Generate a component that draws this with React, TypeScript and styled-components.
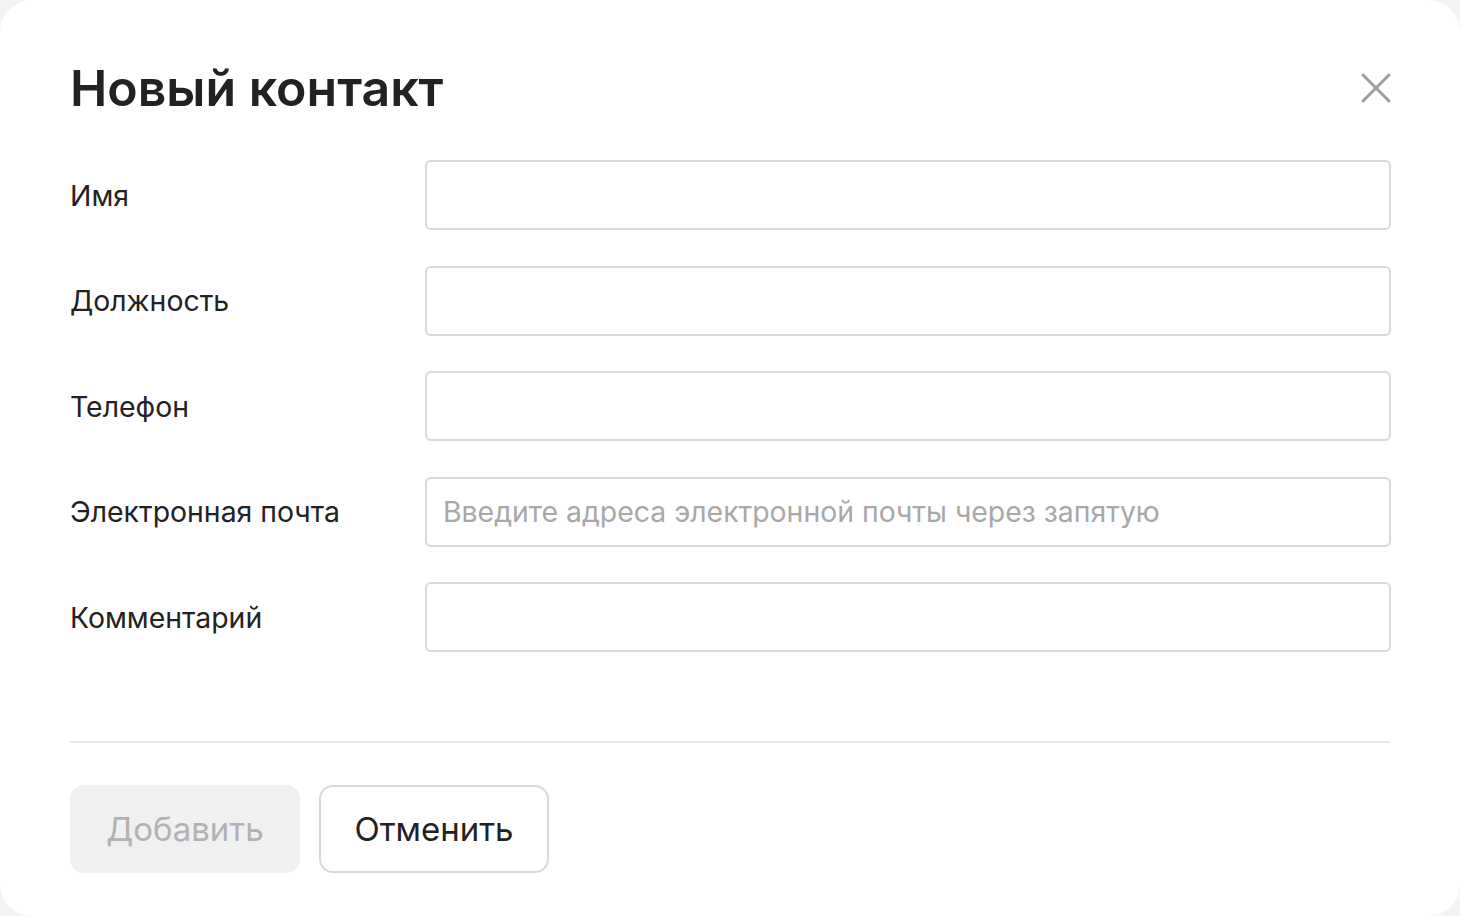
import styled, { createGlobalStyle } from "styled-components";

const GlobalStyle = createGlobalStyle`
  html, body {
    margin: 0;
    padding: 0;
    background: #f3f3f3;
    font-family: Inter, "Noto Sans", "Liberation Sans", sans-serif;
    color: #222;
  }
  * {
    box-sizing: border-box;
  }
`;

const Dialog = styled.div`
  width: 1460px;
  height: 916px;
  background: #fff;
  border-radius: 32px;
  padding: 58px 70px 0 70px;
  display: flex;
  flex-direction: column;
`;

const Header = styled.div`
  display: flex;
  align-items: center;
  justify-content: space-between;
  height: 60px;
`;

const Title = styled.h1`
  margin: 0;
  font-size: 50px;
  line-height: 60px;
  font-weight: 600;
  color: #222;
`;

const CloseButton = styled.button`
  border: none;
  background: none;
  padding: 0;
  width: 32px;
  height: 32px;
  display: flex;
  align-items: center;
  justify-content: center;
  margin-right: -2px;
  cursor: pointer;
`;

const Form = styled.div`
  margin-top: 42px;
  margin-right: -1px;
  display: flex;
  flex-direction: column;
  gap: 35.5px;
`;

const Row = styled.label`
  display: grid;
  grid-template-columns: 355px 1fr;
  align-items: center;
`;

const Label = styled.span`
  font-size: 28.4px;
  color: #222;
`;

const Input = styled.input`
  height: 70px;
  width: 100%;
  border: 2px solid #d9d9d9;
  border-radius: 6px;
  padding: 0 16px;
  font-family: inherit;
  font-size: 28.4px;
  color: #222;
  outline: none;

  &::placeholder {
    color: #a8a8a8;
  }
`;

const Divider = styled.hr`
  margin: 89px 0 0 0;
  border: none;
  height: 2px;
  background: #e8e8e8;
`;

const Actions = styled.div`
  margin-top: 42px;
  display: flex;
  gap: 19px;
`;

const Button = styled.button<{ $variant: "primary" | "secondary" }>`
  width: 230px;
  height: 88px;
  border-radius: 14px;
  font-family: inherit;
  font-size: 33px;
  cursor: pointer;
  border: 2px solid
    ${(p) => (p.$variant === "primary" ? "#f0f0f0" : "#d9d9d9")};
  background: ${(p) => (p.$variant === "primary" ? "#f0f0f0" : "#fff")};
  color: ${(p) => (p.$variant === "primary" ? "#b2b2b2" : "#222")};
`;

const fields = [
  { label: "Имя" },
  { label: "Должность" },
  { label: "Телефон" },
  {
    label: "Электронная почта",
    placeholder: "Введите адреса электронной почты через запятую",
  },
  { label: "Комментарий" },
];

export default function App() {
  return (
    <>
      <GlobalStyle />
      <Dialog>
        <Header>
          <Title>Новый контакт</Title>
          <CloseButton aria-label="Закрыть">
            <svg width="30" height="30" viewBox="0 0 30 30">
              <path
                d="M2 2 L28 28 M28 2 L2 28"
                stroke="#9e9e9e"
                strokeWidth="3"
                strokeLinecap="round"
              />
            </svg>
          </CloseButton>
        </Header>
        <Form>
          {fields.map((f) => (
            <Row key={f.label}>
              <Label>{f.label}</Label>
              <Input placeholder={f.placeholder} />
            </Row>
          ))}
        </Form>
        <Divider />
        <Actions>
          <Button $variant="primary" disabled>
            Добавить
          </Button>
          <Button $variant="secondary">Отменить</Button>
        </Actions>
      </Dialog>
    </>
  );
}
